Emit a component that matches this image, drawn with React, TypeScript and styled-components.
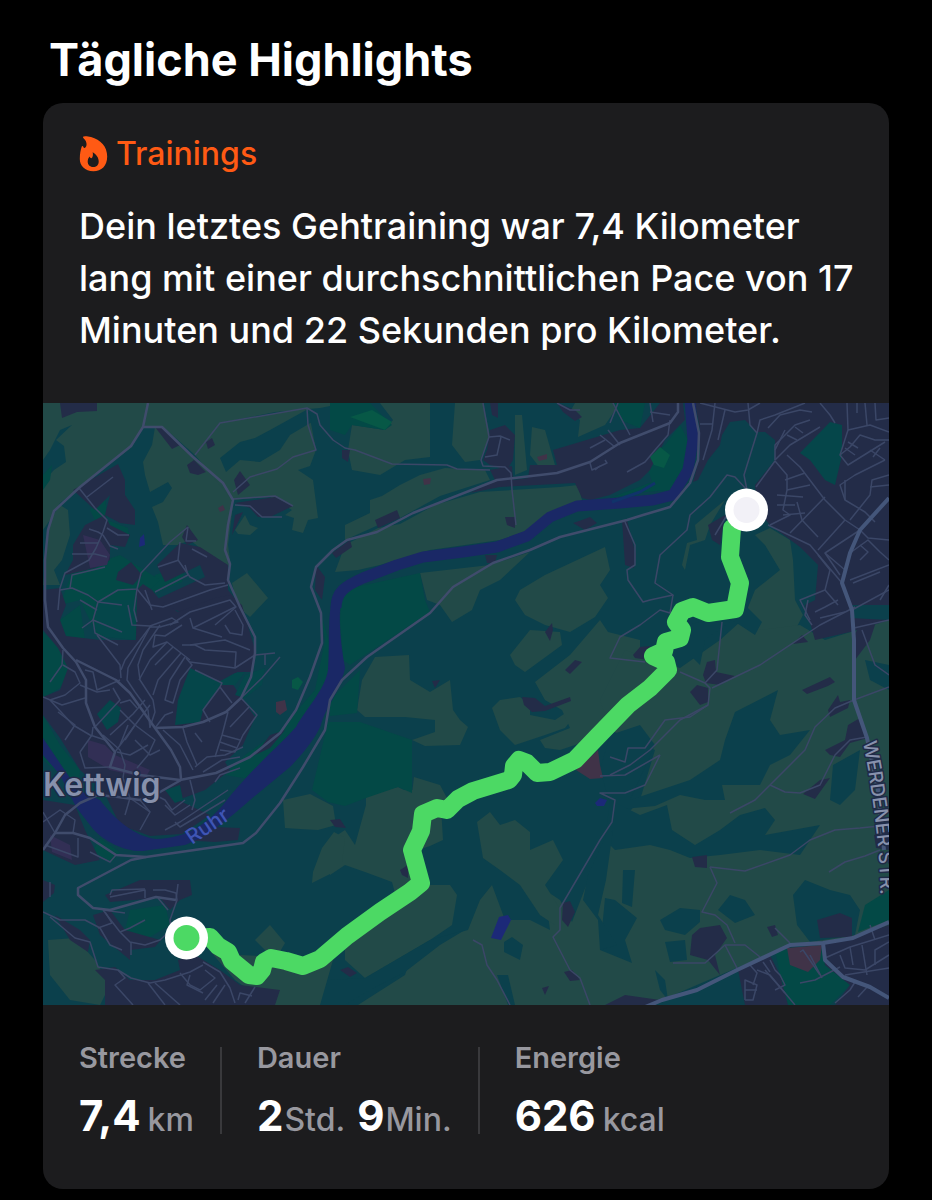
import React from "react";
import styled, { createGlobalStyle } from "styled-components";

const GlobalStyle = createGlobalStyle`
  * { box-sizing: border-box; }
  body {
    margin: 0;
    background: #000;
    color: #fff;
    font-family: Inter, "Liberation Sans", sans-serif;
    -webkit-font-smoothing: antialiased;
  }
`;

const Page = styled.main`
  padding: 32px 43px 11px;
`;

const Title = styled.h1`
  margin: 0 0 15px;
  padding-left: 6px;
  font-size: 45px;
  line-height: 56px;
  font-weight: 700;
`;

const Card = styled.article`
  overflow: hidden;
  border-radius: 20px;
  background: #1c1c1e;
`;

const Summary = styled.header`
  padding: 29px 24px 47px 36px;
`;

const Category = styled.h2`
  display: flex;
  align-items: center;
  gap: 8px;
  margin: 0 0 24px;
  color: #ff5a14;
  font-size: 32px;
  line-height: 44px;
  font-weight: 500;
`;

const Sentence = styled.p`
  margin: 0;
  font-size: 36px;
  line-height: 52px;
  font-weight: 500;
`;

const MapFigure = styled.figure`
  margin: 0;
  background: #0b404c;
`;

const MapSvg = styled.svg`
  display: block;
  width: 100%;
  height: auto;
  font-family: Inter, "Liberation Sans", sans-serif;
`;

const Stats = styled.dl`
  display: flex;
  margin: 0;
  padding: 42px 36px 55px;
`;

const Stat = styled.div`
  padding-right: 26px;

  & + & {
    padding-left: 35px;
    border-left: 2px solid #39393c;
  }
`;

const StatLabel = styled.dt`
  margin-bottom: 28px;
  color: #98989f;
  font-size: 29px;
  line-height: 22px;
  font-weight: 600;
`;

const StatValue = styled.dd`
  display: flex;
  align-items: baseline;
  margin: 0;
  font-size: 42px;
  line-height: 37px;
  font-weight: 700;
`;

const Unit = styled.span<{ $spaced?: boolean }>`
  margin-left: ${(p) => (p.$spaced ? 7 : 1)}px;
  color: #98989f;
  font-size: 32px;
  line-height: 24px;
  font-weight: 500;

  & + span {
    margin-left: 12px;
  }
`;

const FlameIcon = () => (
  <svg width="29" height="36" viewBox="0 0 29 36" aria-hidden="true">
    <path
      fill="currentColor"
      fillRule="evenodd"
      d="M4.2.8C5 0 8 0 12 1 21.500 3.500 28.200 10.500 28.200 20.500 28.200 30 22.500 35.300 14.400 35.300 5.800 35.300.8 29.500.8 23 .8 18 1.600 14 2.600 11 2.900 9.800 3.900 9.700 4.300 10.700 4.600 11.700 5 12.200 5.600 12 7.300 11.500 7.900 9 7.400 7 6.900 4.500 5.500 3.200 4.300 2 3.900 1.600 3.900 1.100 4.200.8ZM13.600 16.300C17.200 18.200 19.700 21.700 19.700 25.400 19.700 29 17.300 31 14.200 31 10.700 31 8.700 28.500 8.700 25.500 8.700 23.200 9.600 21.500 10.700 20.500 11.300 22.300 12.400 22.600 13.200 21.500 14.100 20.200 14.100 18 13.600 16.300Z"
    />
  </svg>
);

const meadows = [
  "43,403 148,403 143,426 132,447 80,487 60,503 50,520 43,530 43,482 54,470 66,462 64,446 56,440 72,425 60,430 50,450 43,460",
  "60,505 68,510 70,535 62,560 54,570 60,585 43,585 50,520",
  "155,427 162,428 195,457 229,490 233,505 228,545 231,567 215,558 205,552 190,540 178,545 163,545 158,522 152,507 163,502 172,488 168,482 150,492 145,475 143,462 152,445",
  "148,403 345,403 320,408 275,412 220,423 195,455 162,426 144,427",
  "195,455 220,423 308,408 316,450 310,466 298,470 313,480 318,518 308,520 303,533 292,530 294,518 285,515 292,510 270,497 232,500",
  "235,530 245,515 250,525 258,528 250,535 238,534",
  "232,583 247,573 268,598 250,617 238,607",
  "352,425 385,430 393,420 380,403 430,403 430,457 405,460 380,475 352,470 348,450",
  "455,403 483,403 490,435 480,460 465,462 452,445",
  "400,485 420,475 445,468 485,470 490,480 440,496 400,518 385,522 345,540 345,525 370,513 370,500 382,496",
  "345,545 378,528 400,524 435,505 480,492 560,487 578,485 582,500 560,510 530,530 500,540 430,550 380,565 358,570 335,572",
  "515,415 522,415 527,470 515,475",
  "532,427 545,430 555,465 540,468 530,455",
  "575,403 620,403 605,425 578,437 580,420 570,412",
  "515,600 520,590 545,575 605,547 610,570 600,585 608,598 595,617 570,632 545,625 525,615",
  "420,573 490,565 530,552 500,580 480,590 472,610 452,622 440,605 427,600",
  "765,485 790,455 800,463 780,490 770,500",
  "695,525 725,500 710,525 705,540 690,545 685,570 682,565 687,543 697,540",
  "755,535 770,528 790,540 793,560 795,600 803,615 790,640 750,640 745,615 755,590 780,570 765,545",
  "357,710 362,680 375,657 409,655 410,680 430,692 450,680 453,710 460,720 468,727 460,745 425,746 412,740 435,732 435,720 405,717 365,717",
  "492,708 500,700 520,697 530,705 530,715 555,720 570,710 575,715 565,728 545,735 515,745 500,730",
  "510,655 530,630 560,632 562,645 525,672 515,665",
  "535,682 570,655 600,620 608,632 640,640 640,690 610,720 590,740 560,750 545,748 540,740 570,728 562,710 545,700",
  "625,650 680,668 720,640 740,622 760,630 800,625 825,640 889,620 889,935 790,945 650,1005 358,1005 405,975 410,960 450,935 468,930 480,900 492,885 505,920 530,920 550,930 545,890 560,900 572,922 600,850 613,830 640,800 655,750 610,730 600,700",
  "330,840 345,830 355,845 366,805 400,790 440,790 443,840 430,846 418,850 418,885 395,893 392,882 365,872 345,865 330,875",
  "345,945 400,905 430,885 450,885 457,895 452,925 430,940 365,978 345,960",
  "366,795 398,787 412,794 414,777 440,785 448,800 420,815 366,815",
  "477,822 490,812 500,825 515,820 530,832 530,850 553,840 563,860 545,885 570,925 555,925 540,915 530,900 520,885 500,870 483,858 480,840",
  "283,800 310,794 333,806 336,825 318,830 300,829 285,828",
  "334,832 345,838 342,862 330,874 312,883 313,872 322,848",
  "255,940 270,925 285,943 275,960",
  "205,945 240,955 333,960 320,1005 270,1005 235,980",
  "48,940 75,938 95,960 110,985 100,1005 70,1000 50,975",
];

const woods = [
  "220,458 240,442 255,438 270,430 308,409 312,422 290,435 280,450 260,462 240,460 226,472",
  "610,735 640,725 655,745 630,800 690,780 720,760 725,740 735,712 778,690 770,720 780,735 810,730 790,755 770,765 760,785 735,785 722,785 725,800 705,800 680,795 655,806 612,810 600,770",
  "610,800 640,815 667,805 672,830 695,845 720,830 740,815 765,808 775,820 765,835 820,825 800,855 760,850 720,855 690,858 670,850 650,845 615,850 605,840",
  "793,895 805,880 830,890 850,895 860,910 855,935 810,942 797,925",
  "660,920 680,908 700,910 700,922 685,935 665,930",
  "730,895 745,900 755,915 735,923 718,910",
  "623,870 635,870 632,907 622,903",
  "605,898 615,900 637,918 625,940 632,963 600,950",
  "665,942 685,940 687,960 670,962",
  "655,970 665,980 668,1000 660,990",
  "833,765 860,750 855,790 840,805 830,800",
  "604,840 613,830 606,880 598,915 617,945 600,950 598,920 583,900 588,875",
  "504,942 512,937 523,945 520,960 504,952",
  "497,975 508,975 515,1005 508,1005",
  "365,978 430,940 465,930 440,945 405,972 370,990 345,1005 330,1005 330,980",
  "690,625 745,605 762,622 755,635 732,620 705,640 700,665 690,655",
  "865,660 889,665 889,690 870,680",
];

const greens = [
  "43,475 52,465 50,480 43,490",
  "90,510 105,490 107,520 128,528 130,540 110,545 100,530",
  "155,575 185,565 182,582 150,595",
  "72,572 120,555 160,580 140,600 135,640 97,635 80,600 60,605",
  "60,620 80,605 85,640 65,638",
  "43,632 63,650 70,670 60,688 43,698",
  "330,403 370,403 392,425 385,430 352,425 345,435 330,430",
  "342,590 420,573 425,600 430,612 350,665 343,660 340,620",
  "330,700 345,685 360,670 357,713 330,716",
  "328,722 360,722 412,740 412,793 398,787 366,798 345,806 328,802 312,790",
  "645,460 665,445 680,425 688,440 685,470 670,490 645,492 610,498 652,482",
  "613,403 645,403 640,428 620,420",
  "850,450 870,440 889,440 885,460 870,475 855,470",
  "820,555 845,545 850,530 868,522 870,535 850,560 830,565",
  "850,590 889,570 889,600 853,603",
  "865,905 889,890 889,920 858,932",
  "775,950 823,945 825,965 850,985 830,1005 785,1005 780,975",
  "43,715 60,745 80,770 78,790 43,760",
  "245,755 280,730 315,690 325,640 320,610 340,680 290,750 255,780 225,775",
  "100,838 120,852 112,862 92,852",
  "130,910 165,905 170,925 145,940 125,930",
];

const brightGreens = [
  "350,417 372,410 392,422 385,430",
  "650,457 660,447 670,455 664,468 654,465",
  "292,680 298,677 303,682 298,690 292,688",
];

const urban = [
  "60,403 97,403 97,411 77,412 62,418",
  "155,427 164,428 180,445 172,449",
  "187,465 194,460 206,472 198,475 190,473",
  "206,442 212,438 215,445 208,449",
  "234,480 240,471 250,485 238,495",
  "235,503 275,497 293,506 270,517 258,517 250,508",
  "235,515 243,512 232,535",
  "73,490 118,464 125,480 125,495 135,510 135,525 120,523 105,515 110,495 95,510",
  "73,545 85,525 105,515 110,525 130,535 125,547 110,545 110,560 95,568 65,575 73,560",
  "182,537 187,525 198,540 187,545",
  "116,580 118,572 131,562 142,575 133,585",
  "157,565 180,543 200,547 228,565 228,590 242,607 205,610 190,618 176,610 165,612 155,600 205,577 200,565 165,582",
  "43,590 60,588 66,605 60,620 66,636 100,640 136,640 137,590 143,584 152,590 160,600 178,612 215,598 230,595 242,605 255,650 253,672 237,672 230,680 243,700 255,717 243,745 225,762 230,770 205,790 178,800 210,815 182,834 150,836 120,825 103,790 80,770 60,738 43,715 43,697 60,690 68,668 58,648 43,630",
  "255,755 270,735 285,730 270,748",
  "490,430 505,425 515,435 513,460 507,470 490,465 483,460 487,450",
  "490,470 512,466 513,480 528,478 530,465 557,465 553,450 620,430 640,428 660,403 683,403 685,420 665,440 650,470 640,480 610,495 590,500 582,498 575,483 500,487 470,493 495,480",
  "375,520 397,510 400,518 378,528",
  "332,553 350,540 352,547 336,558",
  "505,517 515,517 515,528 507,525",
  "485,555 497,555 495,563 487,563",
  "573,523 582,520 590,517 597,523 585,530",
  "557,403 575,410 582,417 575,421 563,412",
  "490,403 498,403 498,418 492,415",
  "342,450 350,450 348,462 342,458",
  "695,403 889,403 889,605 852,605 850,618 889,620 850,632 815,640 805,605 815,600 818,565 800,547 770,525 757,510 755,485 775,460 775,440 765,432 757,432 745,420 730,422 722,435 720,445 708,460 698,480 693,482 700,455 700,430",
  "622,520 627,520 636,555 634,568 625,565",
  "708,525 725,515 720,545 712,540",
  "316,565 325,577 322,600 315,590",
  "545,632 552,623 553,630 550,641",
  "565,670 575,660 582,662 570,674",
  "522,697 535,698 545,706 570,697 571,701 545,711 532,712 524,705",
  "432,681 440,680 435,688",
  "633,655 640,647 650,646 648,660 635,658",
  "690,692 697,685 708,688 708,702 700,705",
  "703,675 707,662 715,660 716,672 735,676 720,685 706,683",
  "793,644 802,635 808,642",
  "802,690 830,677 835,682 828,686 807,694",
  "828,710 838,695 840,702 850,700 848,708 830,717",
  "825,750 845,740 848,725 860,718 868,738 850,743 840,757 830,755",
  "803,794 820,780 830,778 815,799",
  "852,640 862,620 875,625 870,640 855,660",
  "692,857 707,855 707,868 695,867",
  "563,903 570,901 575,912 568,927 562,920",
  "564,972 572,970 580,980 570,981",
  "542,988 549,986 545,995",
  "340,970 348,967 357,973 350,977",
  "400,870 408,865 408,878 402,875",
  "330,820 340,819 346,828 335,827",
  "692,935 700,928 720,925 727,938 715,955 720,975 708,960 690,955",
  "817,920 840,913 852,918 852,937 820,938",
  "767,927 775,925 778,935 772,937",
  "738,970 770,955 780,975 788,1005 745,1005",
  "823,945 889,925 889,1005 835,1005 850,985 825,965",
  "605,1005 625,995 660,1000 655,1005",
  "874,835 889,830 889,850 876,848",
  "105,980 95,970 115,967 130,980 155,980 180,970 178,960 195,955 220,970 240,985 280,990 275,1005 105,1005",
  "105,895 140,880 190,880 192,895 180,900 170,910 160,898 110,902",
  "93,915 110,910 125,930 160,940 165,935 155,947 130,950 130,960 100,935",
  "55,915 80,930 90,940 88,952 70,940",
  "43,880 55,885 54,893 43,902",
  "43,800 75,805 85,830 100,860 75,865 43,850",
  "180,840 215,827 240,828 238,840 215,842",
];

const townGreens = [
  "96,600 135,600 135,640 105,637 95,630",
  "190,668 222,683 214,695 203,710 200,722 175,725 178,700",
  "245,675 265,668 262,685 245,698 235,695",
  "800,453 830,422 842,425 842,455 835,485 825,480 810,460",
  "165,790 180,785 183,800 175,803",
  "213,685 235,673 245,672 235,685",
  "97,714 110,700 121,708 118,722 107,730",
];

const retail = [
  "83,535 100,540 110,555 107,565 90,568",
  "88,740 105,745 115,755 150,770 145,778 110,770 88,757",
  "50,835 70,845 72,860 52,852",
];

const rust = [
  "218,508 223,505 225,510 220,512",
  "423,479 431,478 430,484 424,485",
  "537,457 547,454 547,459 539,461",
  "276,702 285,700 287,710 280,715 276,712",
  "787,948 822,945 820,960 808,972 790,965",
  "576,770 598,750 600,765 603,778 590,779",
];

const ponds = [
  "499,917 508,915 511,920 501,940 491,938",
  "595,803 600,798 607,800 604,806 597,806",
  "140,538 144,534 145,545 139,547",
];

const majorRoads = [
  "148,403 143,427 131,446 80,487 54,511 48,530 45,560 45,600 48,627 63,648 76,662 86,680 86,703 95,727 115,752 110,767 140,775 180,780 216,773 250,757 280,733 296,710 310,677 322,643 321,613 311,587 316,567 333,550 347,540 377,532 413,513 497,480 557,473 590,462 620,443 670,423 678,412 678,403",
  "144,427 162,427 193,457 223,483 233,500 228,525 225,550 230,564 228,580 240,607 255,637 255,653 251,677 241,698 226,712 203,722 183,727 155,728",
  "76,660 116,680 130,693 155,728 171,750 180,767 181,779",
  "55,833 73,833 90,838 116,855 146,857 243,843 256,833 280,803 303,767 325,730 330,700 342,680 367,657 430,613 453,587 493,563 530,550 560,537 627,520 643,515 670,507 690,483 698,460 699,433 693,403",
  "146,857 131,860 78,888 78,895 93,908 110,910 156,897 176,900",
  "43,850 55,833 65,815 80,803 98,795 118,797 140,800 160,792 181,780",
];

const trunkRoads = [
  "889,498 860,530 850,553 842,583 852,610 854,640 854,700 867,738 878,790 884,850",
  "643,1008 662,1000 697,990 737,970 790,945 823,943 853,938 889,922",
  "823,943 825,960 843,977 870,987 889,998",
];

const minorRoads = [
  "195,455 220,423 307,408 317,414 320,425 333,440 345,448 355,450 392,464 447,465 457,469 490,470",
  "307,408 308,425 316,450 293,457 277,469 250,477 233,492",
  "233,499 275,496 293,506", "235,505 250,506 262,517 282,517",
  "483,403 489,437 481,460 483,466 505,467 511,473 512,490 516,525", "489,437 500,436 510,440", "501,437 497,455 485,457",
  "79,488 95,508 107,520 103,532 96,548 89,560 65,573 60,588 58,610", "87,497 113,477",
  "89,529 98,532 103,535", "80,543 98,543", "72,554 95,554 107,557", "107,528 118,535 129,535", "103,535 110,546 118,549",
  "188,527 170,542 141,573 137,589 118,590 98,602 88,595 72,588 60,590", "188,527 186,541 196,541",
  "180,542 178,560 190,577 205,585 225,583", "192,549 207,557", "158,567 179,560", "155,592 188,575 185,565",
  "137,589 150,605 163,607 210,590 228,585", "145,590 152,610", "170,625 190,612 230,600 236,607 215,625",
  "137,589 134,610 137,622", "98,602 93,620 95,633 118,645", "70,588 72,575 105,567", "80,600 97,610",
  "98,602 122,605", "82,628 93,620 122,632",
  "63,650 62,665 50,682", "63,665 75,672 80,683 65,695 50,700", "50,700 73,725 90,735 105,740", "43,697 62,705 85,698",
  "58,712 75,725 65,740", "80,685 97,692 110,690", "97,635 120,665 121,678", "85,670 93,672 97,690 120,680",
  "128,605 132,625 150,626 172,618 178,622 160,627 150,627 125,660 121,670",
  "150,627 128,668 127,680 135,692 148,710 150,728", "160,625 143,650 138,665 140,680 153,700 155,712 150,727",
  "167,642 150,660 139,680", "182,625 165,636 155,635 153,647 167,642 181,653 190,660",
  "181,653 158,680 153,695", "173,647 155,665", "185,657 170,680 165,700 173,703 180,680 192,665 186,658",
  "190,662 235,668 255,655 275,653", "265,654 265,665", "235,668 236,652 205,650 195,645 182,645",
  "190,618 193,628 235,607", "193,628 222,637", "225,625 230,633 242,635 243,625 235,610",
  "190,645 225,640 250,650", "195,670 222,683 220,687 232,703", "220,687 203,710 210,722",
  "241,698 257,715 243,735 235,752 220,750", "249,707 230,727", "228,712 222,735 215,757", "222,735 240,740", "220,742 237,748",
  "241,698 262,678 280,657", "155,728 165,715 173,712",
  "103,735 120,750 125,765 123,778", "95,727 120,700 113,688", "115,752 150,705", "110,735 133,714 145,700",
  "120,710 135,725 155,740 148,755 137,768", "128,725 120,745", "135,725 125,740", "135,740 150,755 160,750", "117,752 130,755 148,745",
  "120,703 130,700 137,708", "163,730 180,745 193,770", "183,728 187,742 197,765", "195,733 202,742",
  "195,767 207,757 225,755 243,747", "203,772 222,760 240,757", "215,782 220,775 240,768",
  "80,752 92,735 93,727", "80,752 85,768 110,767", "190,780 195,800 192,810",
  "123,778 130,798 150,812", "130,798 125,815", "140,800 150,812 140,830", "155,795 165,800 172,810 185,800", "165,830 180,822 228,790",
  "175,822 180,827 225,800", "165,805 175,815 190,805",
  "43,812 55,833", "43,822 60,810 75,820 73,833", "78,838 78,857 45,845", "90,852 110,862 116,855",
  "50,882 50,897", "43,912 60,920 85,920 100,928 110,945 122,950", "50,917 75,938 90,942 98,967 118,970 131,978 150,983 165,980 190,972 203,965",
  "110,897 145,890 145,898", "110,895 112,890 145,889", "153,890 165,890 176,893 177,900 170,920 171,930 160,940 145,945 130,942 120,932 103,910",
  "158,898 168,910", "178,884 176,900", "98,928 112,923 105,912", "103,910 125,913", "120,932 130,928 145,920", "131,955 131,942",
  "118,970 125,978 115,985 133,1005", "148,983 165,1005", "155,983 180,1005", "180,973 190,985 200,990 215,978 205,970", "190,975 187,985 203,993",
  "203,962 220,972 230,988 235,1003", "217,985 205,1000", "225,985 213,1003", "255,987 245,1003", "238,1000 240,993 252,996",
  "600,435 615,447", "590,448 605,440", "590,463 592,470 607,463 605,460", "595,470 600,466", "608,430 620,445", "613,403 630,435", "610,423 618,403", "650,403 653,422", "650,412 670,415",
  "557,403 570,410 580,410", "627,472 645,462 655,450 668,435 670,420",
  "715,403 712,430 703,460", "700,424 712,424", "725,410 718,440", "700,403 735,412 748,410 760,403", "748,403 750,425 757,433 744,475 747,490",
  "757,433 760,420 775,415 805,403", "768,428 780,415 800,410 812,412", "775,460 790,445 820,427", "775,460 775,445 795,425 810,420", "775,450 785,430", "787,435 797,440", "795,427 803,433",
  "820,403 830,415 835,423", "847,403 848,430 870,425 889,432", "865,403 867,425", "857,403 857,413", "875,403 876,420 889,418",
  "756,487 775,461 787,475 787,490 783,510 790,515 770,525", "787,455 800,467 825,500 845,520 860,530", "785,480 805,473", "787,490 810,485", "777,495 803,497", "777,505 795,505", "783,515 805,513", "797,502 802,520 818,537", "825,497 790,533", "845,520 818,550", "845,480 845,500 865,512 875,522",
  "848,430 840,455 848,465 885,442", "840,455 850,447 860,435 875,440 889,440", "845,448 855,455", "848,442 858,448", "870,450 885,460", "873,457 880,448", "885,460 855,475 840,485 845,500",
  "889,475 872,480 870,495 850,520", "889,485 870,487", "860,530 868,538 889,540", "850,553 868,540 880,552 889,560", "860,545 868,552 860,560", "840,575 825,553 860,530",
  "825,553 845,570", "818,555 830,570 825,590 800,600 810,620", "825,590 838,605", "850,580 889,565", "853,583 880,572", "889,590 852,610", "889,585 880,600",
  "768,525 810,545 842,583", "747,490 735,477 727,475 710,497 690,515 687,530 660,555 655,583 673,595 650,600 643,602 628,580 627,570 635,565 635,545 625,522",
  "673,595 670,613 660,610 640,625 620,637 610,658 645,662",
  "745,510 727,515 715,535",
  "722,622 717,670 705,683 710,688 708,705 680,720 650,750 630,765 610,775", "680,672 705,683", "712,688 760,665 820,625 855,607",
  "708,705 690,717 665,720 645,748 628,748 625,762 610,757", "660,755 645,785 625,793 600,793 615,800 612,822 600,840 560,908 560,930 553,937 570,970 580,978 590,1005",
  "600,776 625,775 660,755",
  "808,600 805,615 812,625", "815,612 825,607 838,600", "820,618 845,612",
  "854,628 889,620", "862,630 875,665 889,675", "854,700 889,687", "854,700 835,708 815,727 805,750 770,785 755,800 730,813", "867,737 850,740 835,755 820,785 800,793 785,792 770,785",
  "889,825 860,828 835,830 810,840 790,855 745,871 710,867", "880,850 865,856 845,862 829,872",
  "710,867 717,883 702,912 715,915 727,925 735,943", "673,963 705,963 725,945 745,945 760,957", "725,945 738,970", "775,928 790,943",
  "473,940 482,945 487,965 497,980 510,1005",
  "800,952 803,950 820,975", "800,983 815,980 840,967", "810,955 822,978", "745,1000 745,980 757,985 753,1000 745,1000", "745,990 757,990", "750,965 757,973 753,985", "757,970 770,975 795,1005", "770,960 775,970 780,975 785,985 775,990", "765,970 785,993", "763,962 770,972",
  "825,958 850,947 889,935", "840,955 845,968 865,970 889,955", "850,947 853,965", "862,945 867,975", "875,965 875,950 889,942", "845,975 889,968", "869,985 858,997", "835,1003 850,990 855,982",
  "870,925 875,940",
];

const riverBody =
  "M333,597 C327,615 330,640 328,670 C325,690 305,710 296,727 C280,745 250,770 223,805 C205,825 187,838 156,839 C136,837 115,820 100,800 L78,790 L43,738 L43,755 L60,775 L76,807 L93,829 C105,842 125,852 143,851 L185,845 C205,838 230,818 250,800 L290,767 C305,752 317,735 321,725 C325,708 340,692 345,668 C341,645 338,625 341,600 Z";

const route =
  "M186,938 L210,937 L218,946 L228,952 L232,961 L243,970 L249,975 L257,976 L262,970 L264,962 L271,958 L286,961 L303,966 L320,959 L347,936 L380,912 L410,892 L421,883 L412,850 L421,831 L423,814 L437,808 L447,810 L458,799 L473,791 L509,780 L513,775 L514,766 L519,760 L527,763 L537,773 L550,772 L575,760 L597,737 L628,705 L650,688 L668,670 L666,662 L653,656 L664,651 L666,642 L680,638 L682,630 L676,622 L682,611 L693,607 L708,613 L735,609 L740,583 L730,557 L732,528";

const Areas = ({ items, fill }: { items: string[]; fill: string }) => (
  <g fill={fill}>
    {items.map((points) => (
      <polygon key={points} points={points} />
    ))}
  </g>
);

const Roads = ({ items, color, width }: { items: string[]; color: string; width: number }) => (
  <g fill="none" stroke={color} strokeWidth={width} strokeLinejoin="round">
    {items.map((points) => (
      <polyline key={points} points={points} />
    ))}
  </g>
);

const RouteMap = () => (
  <MapSvg viewBox="43 403 846 602" role="img" aria-label="Karte der Trainingsroute">
    <rect x="43" y="403" width="846" height="602" fill="#0b404c" />
    <Areas items={meadows} fill="#224a48" />
    <Areas items={woods} fill="#0b404c" />
    <Areas items={greens} fill="#034946" />
    <Areas items={urban} fill="#232c48" />
    <Areas items={townGreens} fill="#05464a" />
    <Areas items={brightGreens} fill="#075846" />
    <Areas items={retail} fill="#322f55" />
    <Areas items={rust} fill="#403348" />
    <Areas items={ponds} fill="#1c2978" />
    <path d={riverBody} fill="#1a2866" />
    <path
      d="M336,608 C336,592 345,586 363,578 L397,565 L423,557 L463,552 L497,547 L527,536 L550,517 L577,506 L620,503 L653,500 L673,495 L688,470 L693,440 L690,400"
      fill="none"
      stroke="#1a2866"
      strokeWidth="11"
      strokeLinejoin="round"
    />
    <path d="M612,502 L640,492 L655,483" fill="none" stroke="#10336a" strokeWidth="3" />
    <Roads items={minorRoads} color="#3b4767" width={1.5} />
    <Roads items={majorRoads} color="#404c6c" width={2.5} />
    <Roads items={trunkRoads} color="#44567a" width={4} />

    <g fill="#8791ac" stroke="#202b47" strokeWidth="3" paintOrder="stroke" strokeLinejoin="round">
      <text x="43" y="796" fontSize="32" fontWeight="600">Kettwig</text>
      <path id="street" d="M863,742 L869,775 L874,810 L878,845 L880,875 L881,915" fill="none" stroke="none" />
      <text fontSize="19" fontWeight="500">
        <textPath href="#street">WERDENER STR.</textPath>
      </text>
    </g>
    <text transform="translate(192 845) rotate(-34)" fontSize="21" fontWeight="500" fill="#3f55b4">
      Ruhr
    </text>

    <path d={route} fill="none" stroke="#4cd964" strokeWidth="18" strokeLinecap="round" strokeLinejoin="round" />
    <circle cx="186.500" cy="938" r="21.500" fill="#fff" />
    <circle cx="186.500" cy="938" r="13" fill="#4cd964" />
    <circle cx="746.500" cy="510" r="21.500" fill="#fff" />
    <circle cx="746.500" cy="510" r="13" fill="#f2f1f7" />
  </MapSvg>
);

export default function App() {
  return (
    <>
      <GlobalStyle />
      <Page>
        <Title>Tägliche Highlights</Title>
        <Card>
          <Summary>
            <Category>
              <FlameIcon />
              Trainings
            </Category>
            <Sentence>
              Dein letztes Gehtraining war 7,4 Kilometer lang mit einer durchschnittlichen Pace von 17 Minuten und 22
              Sekunden pro Kilometer.
            </Sentence>
          </Summary>
          <MapFigure>
            <RouteMap />
          </MapFigure>
          <Stats>
            <Stat>
              <StatLabel>Strecke</StatLabel>
              <StatValue>
                <span>7,4</span>
                <Unit $spaced>km</Unit>
              </StatValue>
            </Stat>
            <Stat>
              <StatLabel>Dauer</StatLabel>
              <StatValue>
                <span>2</span>
                <Unit>Std.</Unit>
                <span>9</span>
                <Unit>Min.</Unit>
              </StatValue>
            </Stat>
            <Stat>
              <StatLabel>Energie</StatLabel>
              <StatValue>
                <span>626</span>
                <Unit $spaced>kcal</Unit>
              </StatValue>
            </Stat>
          </Stats>
        </Card>
      </Page>
    </>
  );
}
